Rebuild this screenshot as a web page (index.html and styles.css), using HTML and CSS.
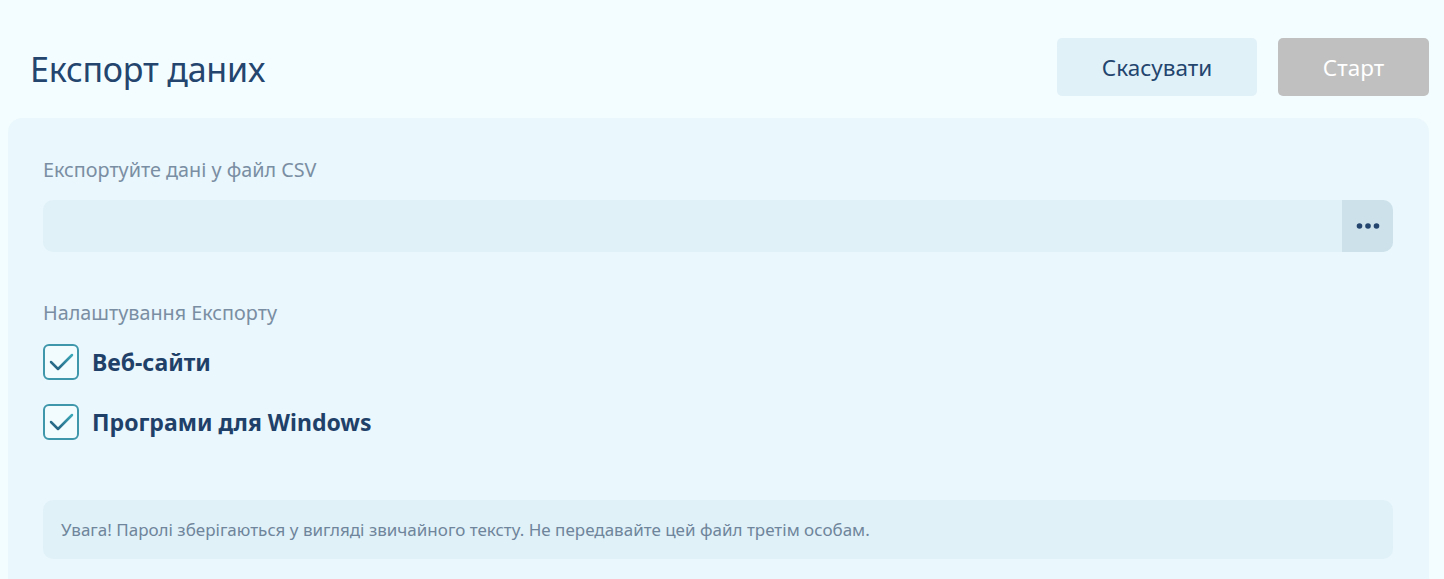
FILE: index.html
```html
<!DOCTYPE html>
<html lang="uk">
<head>
    <meta charset="UTF-8">
    <title>Експорт даних</title>
    <link rel="stylesheet" href="styles.css">
</head>
<body>
    <div class="page">
        <div class="header">
            <h1 class="title">Експорт даних</h1>
            <div class="actions">
                <button class="btn btn-cancel">Скасувати</button>
                <button class="btn btn-start" disabled>Старт</button>
            </div>
        </div>

        <div class="panel">
            <div class="field-label">Експортуйте дані у файл CSV</div>
            <div class="path-input">
                <input type="text" class="path-text">
                <button class="path-browse" title="Огляд">
                    <svg width="24" height="6" viewBox="0 0 24 6">
                        <circle cx="3.5" cy="3" r="2.8" fill="#23456e"/>
                        <circle cx="12" cy="3" r="2.8" fill="#23456e"/>
                        <circle cx="20.5" cy="3" r="2.8" fill="#23456e"/>
                    </svg>
                </button>
            </div>

            <div class="field-label options-label">Налаштування Експорту</div>
            <svg width="0" height="0" class="defs">
                <defs>
                    <linearGradient id="tick" x1="0" y1="1" x2="1" y2="0">
                        <stop offset="0" stop-color="#23597a"/>
                        <stop offset="1" stop-color="#3ba8b8"/>
                    </linearGradient>
                </defs>
            </svg>
            <label class="check-row">
                <span class="check-box">
                    <svg width="32" height="32" viewBox="0 0 32 32">
                        <path d="M6 16 L13 23 L27 9" fill="none" stroke="url(#tick)" stroke-width="2.5" stroke-linecap="round" stroke-linejoin="round"/>
                    </svg>
                </span>
                <span class="check-text">Веб-сайти</span>
            </label>
            <label class="check-row">
                <span class="check-box">
                    <svg width="32" height="32" viewBox="0 0 32 32">
                        <path d="M6 16 L13 23 L27 9" fill="none" stroke="url(#tick)" stroke-width="2.5" stroke-linecap="round" stroke-linejoin="round"/>
                    </svg>
                </span>
                <span class="check-text">Програми для Windows</span>
            </label>

            <div class="notice">Увага! Паролі зберігаються у вигляді звичайного тексту. Не передавайте цей файл третім особам.</div>
        </div>
    </div>
</body>
</html>
```

FILE: styles.css
```css
body {
    margin: 0;
    background-color: #f3fdff;
    font-family: "Noto Sans", "Open Sans", sans-serif;
    color: #23456e;
}
.page {
    padding: 0 15px 0 8px;
}
.header {
    display: flex;
    align-items: flex-start;
    justify-content: space-between;
    padding: 38px 0 22px 22px;
}
.title {
    margin: 0;
    font-size: 34px;
    font-weight: 400;
    color: #23456e;
    letter-spacing: -0.2px;
    line-height: 54px;
    padding-top: 4px;
}
.actions {
    display: flex;
    gap: 21px;
}
.btn {
    height: 58px;
    border: none;
    border-radius: 5px;
    font-family: inherit;
    font-size: 22.5px;
    cursor: pointer;
}
.btn-cancel {
    width: 200px;
    background-color: #e1f1f8;
    color: #23456e;
}
.btn-start {
    width: 151px;
    background-color: #c0c0c0;
    color: #ffffff;
    cursor: default;
}
.panel {
    background-color: #eaf7fc;
    border-radius: 14px 14px 0 0;
    padding: 37px 36px 20px 35px;
}
.field-label {
    font-size: 19.8px;
    color: #7a8ea3;
    line-height: 30px;
}
.defs {
    position: absolute;
}
.path-input {
    display: flex;
    height: 52px;
    margin-top: 15px;
    background-color: #e0f1f8;
    border-radius: 10px;
    overflow: hidden;
}
.path-text {
    flex: 1;
    border: none;
    background: transparent;
    outline: none;
    padding: 0 16px;
    font-family: inherit;
    font-size: 18px;
    color: #23456e;
}
.path-browse {
    width: 51px;
    border: none;
    padding: 0;
    background-color: #cde1ea;
    display: flex;
    align-items: center;
    justify-content: center;
    cursor: pointer;
}
.options-label {
    margin-top: 46px;
}
.check-row {
    display: flex;
    align-items: center;
    gap: 13px;
    margin-top: 16px;
    cursor: pointer;
}
.check-row + .check-row {
    margin-top: 24px;
}
.check-box {
    width: 32px;
    height: 32px;
    border: 2px solid #3e97ab;
    border-radius: 6px;
    background-color: #f2fcff;
    display: flex;
    align-items: center;
    justify-content: center;
}
.check-text {
    font-size: 23px;
    font-weight: 700;
    color: #1f4169;
}
.notice {
    margin-top: 60px;
    background-color: #e0f1f8;
    border-radius: 10px;
    padding: 0 18px;
    height: 59px;
    line-height: 59px;
    font-size: 17px;
    color: #6f859b;
}
```
